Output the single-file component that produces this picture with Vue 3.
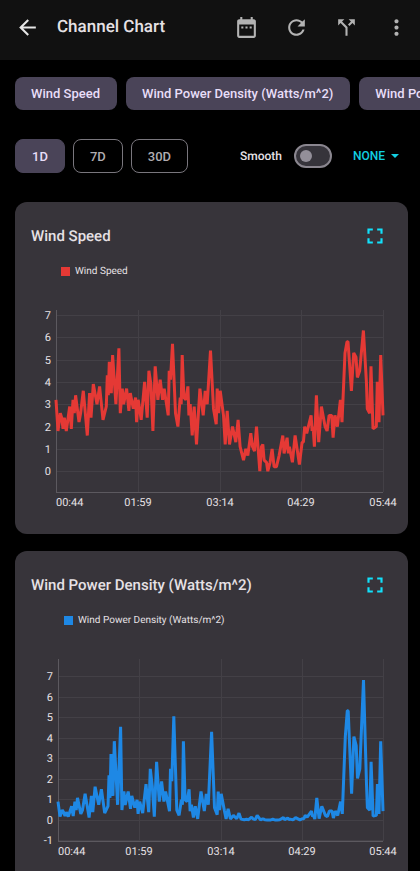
<script setup>
import { ref, computed, onMounted, onBeforeUnmount } from 'vue'

const channels = ['Wind Speed', 'Wind Power Density (Watts/m^2)', 'Wind Power']
const ranges = ['1D', '7D', '30D']
const activeRange = ref('1D')
const smooth = ref(false)
const grouping = ref('NONE')

// [offset along the time axis, wind speed]
const span = 982
const speed = [
  [0, 3.2], [6, 1.8], [13, 2.6], [17, 2.4], [21, 1.9], [25, 2.4], [31, 1.8], [41, 2.9], [46, 1.9], [51, 3.2],
  [55, 2.6], [59, 3.4], [69, 2.2], [74, 2.6], [82, 3.6], [94, 1.6], [101, 3.5], [105, 2.4], [112, 3.9], [123, 3],
  [131, 3.8], [141, 2.3], [151, 2.9], [154, 4.3], [157, 3.4], [160, 4.9], [166, 3.5], [170, 5.2], [180, 3], [189, 5.5],
  [193, 2.6], [199, 3.7], [203, 3], [212, 3.7], [219, 2.7], [223, 3.5], [232, 2.8], [239, 3.3], [242, 2.2], [247, 3.2],
  [256, 2.3], [266, 4], [274, 2.4], [279, 4.5], [285, 3.9], [291, 1.8], [298, 4.7], [306, 3.2], [313, 4.1], [320, 3.2],
  [325, 3.7], [337, 2.5], [340, 4.5], [344, 4.1], [350, 5.7], [359, 2.6], [366, 2], [373, 3.3], [376, 3], [379, 5.2],
  [384, 3.3], [390, 3.2], [396, 3.8], [399, 2.5], [403, 3], [409, 1.6], [415, 2.9], [422, 1.2], [432, 3.7], [442, 2.5],
  [448, 3.6], [454, 3], [464, 5.4], [473, 2.8], [481, 2.1], [484, 3.7], [488, 2.6], [493, 3.6], [503, 2.5], [508, 1.2],
  [514, 2.7], [521, 1.2], [530, 2], [540, 1.3], [547, 2.3], [553, 1.1], [563, 0.5], [570, 1], [576, 0.7], [585, 1.7],
  [590, 1.1], [596, 0.9], [602, 2], [612, 0], [617, 1.1], [621, 1.2], [625, 0.5], [632, 0.4], [636, 0], [643, 0.4],
  [649, 1], [655, 0.2], [662, 0.2], [670, 0.7], [681, 1.6], [685, 0.8], [694, 1.5], [698, 0.8], [701, 1.1], [710, 0.4],
  [718, 1.6], [731, 0.3], [739, 1.3], [743, 1.3], [747, 2], [753, 1.7], [766, 2.5], [769, 1.8], [772, 2], [776, 1.1],
  [782, 3.4], [789, 1.3], [797, 2.9], [808, 2], [814, 1.8], [820, 2.5], [828, 2.5], [832, 1.5], [838, 2.5], [845, 2],
  [854, 3.2], [859, 2.2], [868, 5.3], [874, 5.8], [877, 5.8], [887, 3.6], [894, 5.3], [901, 5.1], [905, 4.2], [912, 4.5],
  [923, 6.3], [932, 4], [935, 2.8], [942, 2.6], [946, 4.7], [952, 1.9], [962, 2], [965, 4], [970, 2.2], [975, 5.2], [982, 2.5],
]
// Power density grows with the cube of the speed
const power = speed.map(([t, v]) => [t, 0.0273 * v ** 3])

const times = ['00:44', '01:59', '03:14', '04:29', '05:44']
const plotTop = 31
const plotBottom = 213
const chartHeight = 255

const width = ref(393)
const list = ref(null)
let observer
onMounted(() => {
  observer = new ResizeObserver(([entry]) => { width.value = entry.contentRect.width })
  observer.observe(list.value)
})
onBeforeUnmount(() => observer?.disconnect())

const sources = [
  { id: 'speed', title: 'Wind Speed', color: '#e53935', data: speed, left: 41, min: -0.93, max: 7.22, ticks: [7, 6, 5, 4, 3, 2, 1, 0] },
  { id: 'power', title: 'Wind Power Density (Watts/m^2)', color: '#1e88e5', data: power, left: 43, min: -1.03, max: 7.85, ticks: [7, 6, 5, 4, 3, 2, 1, 0, -1] },
]

const charts = computed(() => sources.map((s) => {
  const right = width.value - 25
  const x = (f) => s.left + f * (right - s.left)
  const y = (v) => plotBottom - ((v - s.min) / (s.max - s.min)) * (plotBottom - plotTop)
  return {
    ...s,
    right,
    points: s.data.map(([t, v]) => `${x(t / span).toFixed(1)},${y(v).toFixed(1)}`).join(' '),
    yTicks: s.ticks.map((v) => ({ v, y: Math.round(y(v)) })),
    xTicks: times.map((label, i) => ({ label, x: Math.round(x(i / (times.length - 1))), anchor: i ? 'middle' : 'start' })),
  }
}))
</script>

<template>
  <div class="app">
    <header class="bar">
      <button class="icon" aria-label="Back">
        <svg viewBox="0 0 24 24"><path d="M20 11H7.83l5.59-5.59L12 4l-8 8 8 8 1.41-1.41L7.83 13H20v-2z" /></svg>
      </button>
      <h1>Channel Chart</h1>
      <nav class="actions">
        <button class="icon" aria-label="Date range">
          <svg viewBox="0 0 24 24"><path d="M9 11H7v2h2v-2zm4 0h-2v2h2v-2zm4 0h-2v2h2v-2zm2-7h-1V2h-2v2H8V2H6v2H5c-1.11 0-1.99.9-1.99 2L3 20c0 1.1.89 2 2 2h14c1.1 0 2-.9 2-2V6c0-1.1-.9-2-2-2zm0 16H5V9h14v11z" /></svg>
        </button>
        <button class="icon" aria-label="Refresh">
          <svg viewBox="0 0 24 24"><path d="M17.65 6.35C16.2 4.9 14.21 4 12 4c-4.42 0-7.99 3.58-7.99 8s3.57 8 7.99 8c3.73 0 6.84-2.55 7.73-6h-2.08c-.82 2.33-3.04 4-5.65 4-3.31 0-6-2.69-6-6s2.69-6 6-6c1.66 0 3.14.69 4.22 1.78L13 11h7V4l-2.35 2.35z" /></svg>
        </button>
        <button class="icon" aria-label="Split">
          <svg viewBox="0 0 24 24"><path d="M14 4l2.29 2.29-2.88 2.88 1.42 1.42 2.88-2.88L20 10V4h-6zm-4 0H4v6l2.29-2.29 4.71 4.7V20h2v-8.41l-5.29-5.3L10 4z" /></svg>
        </button>
        <button class="icon" aria-label="More">
          <svg viewBox="0 0 24 24"><path d="M12 8c1.1 0 2-.9 2-2s-.9-2-2-2-2 .9-2 2 .9 2 2 2zm0 2c-1.1 0-2 .9-2 2s.9 2 2 2 2-.9 2-2-.9-2-2-2zm0 6c-1.1 0-2 .9-2 2s.9 2 2 2 2-.9 2-2-.9-2-2-2z" /></svg>
        </button>
      </nav>
    </header>

    <main class="content">
      <div class="chips">
        <button v-for="c in channels" :key="c" class="chip">{{ c }}</button>
      </div>

      <div class="controls">
        <div class="ranges">
          <button
            v-for="r in ranges"
            :key="r"
            class="range"
            :class="{ active: r === activeRange }"
            @click="activeRange = r"
          >{{ r }}</button>
        </div>
        <label class="smooth">
          <span>Smooth</span>
          <input v-model="smooth" type="checkbox" role="switch" class="switch">
        </label>
        <label class="grouping">
          <select v-model="grouping" aria-label="Grouping">
            <option>NONE</option>
          </select>
          <svg viewBox="0 0 8 4"><path d="M0 0h8L4 4z" /></svg>
        </label>
      </div>

      <div ref="list" class="cards">
        <section v-for="c in charts" :key="c.id" class="card">
          <div class="card-head">
            <h2>{{ c.title }}</h2>
            <button class="expand" aria-label="Full screen">
              <svg viewBox="0 0 24 24"><path d="M7 14H5v5h5v-2H7v-3zm-2-4h2V7h3V5H5v5zm12 7h-3v2h5v-5h-2v3zM14 5v2h3v3h2V5h-5z" /></svg>
            </button>
          </div>
          <div class="legend" :class="c.id">
            <span class="swatch" />
            <span>{{ c.title }}</span>
          </div>
          <svg class="chart" :width="width" :height="chartHeight">
            <g class="grid">
              <line v-for="t in c.yTicks" :key="t.v" :x1="c.left" :x2="c.right" :y1="t.y" :y2="t.y" />
              <line v-for="t in c.xTicks" :key="t.label" :x1="t.x" :x2="t.x" :y1="plotTop" :y2="plotBottom" />
            </g>
            <path class="axis" :d="`M${c.left} ${plotTop}V${plotBottom}H${c.right}`" />
            <polyline class="series" :points="c.points" :stroke="c.color" />
            <text v-for="t in c.yTicks" :key="t.v" :x="c.left - 5" :y="t.y + 4" text-anchor="end">{{ t.v }}</text>
            <text v-for="t in c.xTicks" :key="t.label" :x="t.x" :y="plotBottom + 14" :text-anchor="t.anchor">{{ t.label }}</text>
          </svg>
        </section>
      </div>
    </main>
  </div>
</template>

<style>
body {
  background: #000;
}
</style>

<style scoped>
.app {
  display: flex;
  flex-direction: column;
  height: 100vh;
  overflow: hidden;
  background: #000;
  color: #e6e1e5;
  font-family: Roboto, sans-serif;
  text-rendering: geometricPrecision;
}
button {
  margin: 0;
  padding: 0;
  border: 0;
  background: none;
  color: inherit;
  font: inherit;
}
svg {
  display: block;
}
.bar {
  display: flex;
  flex: none;
  align-items: center;
  height: 60px;
  padding: 0 11px 6px 15px;
  box-sizing: border-box;
  background: #111;
}
.icon,
.icon svg {
  width: 25px;
  height: 25px;
}
.icon svg {
  fill: #e6e6e6;
}
h1 {
  flex: 1;
  margin: 0 0 0 17px;
  font-size: 17px;
  font-weight: 500;
  line-height: 25px;
}
.actions {
  display: flex;
  gap: 25px;
}
.actions .icon svg {
  fill: #b3b3b3;
}
.content {
  flex: 1;
  min-height: 0;
  overflow-x: hidden;
  overflow-y: auto;
  scrollbar-width: none;
}
.chips {
  display: flex;
  gap: 9px;
  padding: 17px 0 0 15px;
  overflow: hidden;
}
.chip {
  flex: none;
  height: 33px;
  padding: 0 17px 0 16px;
  border-radius: 8px;
  background: #4a4458;
  color: #e8def8;
  font-size: 13px;
  font-weight: 500;
  white-space: nowrap;
}
.controls {
  display: flex;
  align-items: center;
  padding: 29px 21px 0 15px;
}
.ranges {
  display: flex;
  flex: 1;
  gap: 8px;
}
.range {
  height: 34px;
  padding: 0 16px;
  border: 1px solid #79767d;
  border-radius: 8px;
  color: #b0adb0;
  font-size: 13px;
  font-weight: 500;
}
.range.active {
  border-color: #4a4458;
  background: #4a4458;
  color: #e8def8;
}
.smooth {
  display: flex;
  align-items: center;
  gap: 12px;
  font-size: 12px;
  font-weight: 500;
}
.switch {
  display: flex;
  align-items: center;
  width: 38px;
  height: 24px;
  margin: 0;
  padding: 0 4px;
  box-sizing: border-box;
  appearance: none;
  border: 2px solid #8a868f;
  border-radius: 12px;
  background: #36343b;
}
.switch::before {
  content: '';
  width: 12px;
  height: 12px;
  border-radius: 50%;
  background: #938f99;
}
.switch:checked::before {
  margin-left: auto;
}
.grouping {
  display: flex;
  align-items: center;
  gap: 5px;
  margin-left: 21px;
}
.grouping select {
  padding: 0;
  border: 0;
  appearance: none;
  background: none;
  color: #12cfe2;
  font: 500 12px/16px Roboto, sans-serif;
}
.grouping svg {
  width: 8px;
  height: 4px;
  fill: #12cfe2;
}
.cards {
  display: flex;
  flex-direction: column;
  gap: 17px;
  margin: 29px 12px 17px 15px;
}
.card {
  overflow: hidden;
  border-radius: 12px;
  background: #37343a;
}
.card-head {
  display: flex;
  align-items: center;
  justify-content: space-between;
  padding: 21px 20px 15px 16px;
}
h2 {
  margin: 0;
  font-size: 15px;
  font-weight: 500;
  line-height: 26px;
}
.expand,
.expand svg {
  width: 26px;
  height: 26px;
}
.expand svg {
  fill: #12e0fa;
}
.legend {
  display: flex;
  align-items: center;
  gap: 5px;
  padding-left: 46px;
  font-size: 10px;
  line-height: 15px;
}
.legend.power {
  padding-left: 49px;
}
.swatch {
  width: 9px;
  height: 9px;
  background: #e53935;
}
.power .swatch {
  background: #1e88e5;
}
.chart text {
  fill: #e6e1e5;
  font-size: 11px;
}
.grid line {
  stroke: #434046;
  shape-rendering: crispEdges;
}
.axis {
  fill: none;
  stroke: #5c595f;
  shape-rendering: crispEdges;
}
.series {
  fill: none;
  stroke-width: 3;
  stroke-linejoin: bevel;
}
</style>
